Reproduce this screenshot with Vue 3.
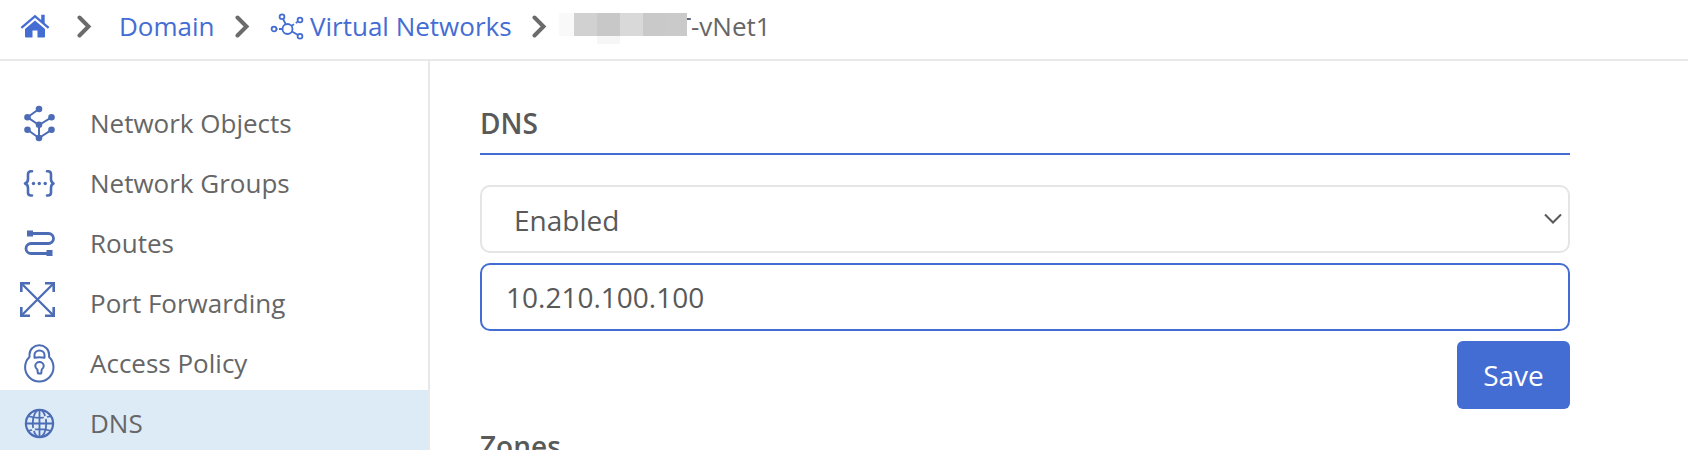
<script setup>
import { ref } from 'vue'

const items = ['Network Objects', 'Network Groups', 'Routes', 'Port Forwarding', 'Access Policy', 'DNS']
const active = ref('DNS')
const mode = ref('Enabled')
const server = ref('10.210.100.100')
</script>

<template>
  <div class="page">
    <nav class="crumbs">
      <svg class="home" width="30" height="26" viewBox="0 0 30 26">
        <path d="M15 6.6 25 15v7.6a1 1 0 0 1-1 1h-6.500v-7.200h-5v7.200H6a1 1 0 0 1-1-1V15z" />
        <path d="M15 .8 21.200 6V.8h3.500v8.100l4.700 4-1.500 1.800L15 3.800 2.100 14.700.6 12.900z" />
      </svg>
      <svg class="sep s1" width="15" height="24" viewBox="0 0 15 24"><path d="M2.500 2.500 11.500 11.500 2.500 20.500" /></svg>
      <a class="domain">Domain</a>
      <svg class="sep s2" width="15" height="24" viewBox="0 0 15 24"><path d="M2.500 2.500 11.500 11.500 2.500 20.500" /></svg>
      <svg class="vnet" width="34" height="28" viewBox="0 0 34 28">
        <circle cx="17.500" cy="16" r="5" />
        <circle cx="4" cy="16" r="2.400" />
        <circle cx="12" cy="3.700" r="2.400" />
        <circle cx="30" cy="7" r="2.400" />
        <circle cx="30" cy="23.200" r="2.400" />
        <path d="M13 5.800 15.600 11M22 18.500l6 3.500M6.500 16h1M9 16h3M22 12.600l2-1.300M25.800 10l1.600-1.100" />
      </svg>
      <a class="networks">Virtual Networks</a>
      <svg class="sep s3" width="15" height="24" viewBox="0 0 15 24"><path d="M2.500 2.500 11.500 11.500 2.500 20.500" /></svg>
      <span class="mask">
        <i class="m1"></i><i class="m2"></i><i class="m3"></i><i class="m4"></i><i class="m5"></i><i class="m6"></i>
      </span>
      <span class="clip"><span>T</span></span>
      <span class="current">-vNet1</span>
    </nav>

    <div class="body">
      <aside class="side">
        <div v-for="item in items" :key="item" class="row" :class="{ active: item === active }">
          <svg class="icon" width="40" height="44" viewBox="0 0 40 44">
            <g v-if="item === 'Network Objects'">
              <path class="l" stroke-width="2" d="M21 9 9.500 17.300 21 25 33.500 17.300M21 25V38M9.500 29.800 21 38 33.500 29.800" />
              <g class="f">
                <circle cx="21" cy="9" r="3.300" /><circle cx="9.500" cy="17.300" r="3.300" />
                <circle cx="33.500" cy="17.300" r="3.300" /><circle cx="21" cy="24.800" r="3.300" />
                <circle cx="9.500" cy="29.800" r="3.300" /><circle cx="33.500" cy="29.800" r="3.300" />
                <circle cx="21" cy="38" r="3.300" />
              </g>
            </g>
            <g v-else-if="item === 'Network Groups'">
              <path class="l" stroke-width="2.600" d="M14 11.300h-1q-3 0-3 3v4.700q0 3.500-3 4.500 3 1 3 4.500V32.500q0 3 3 3h1M29 11.300h1q3 0 3 3v4.700q0 3.500 2.500 4.500-2.500 1-2.500 4.500V32.500q0 3-3 3h-1" />
              <g class="f"><circle cx="15.500" cy="23.500" r="1.700" /><circle cx="21.300" cy="23.500" r="1.700" /><circle cx="27.200" cy="23.500" r="1.700" /></g>
            </g>
            <g v-else-if="item === 'Routes'">
              <path class="l" stroke-width="2.800" d="M14 13.500h16.500a5 5 0 0 1 0 10H13a5 5 0 0 0 0 10h16" />
              <path class="f" d="M9 10.500h6v6H9zM28.500 30h6v6h-6z" />
            </g>
            <g v-else-if="item === 'Port Forwarding'">
              <path class="l arrow" stroke-width="2.300" d="M3.500 3.500 35.500 35.500M35.500 3.500 3.500 35.500" />
              <path class="l arrow" stroke-width="2.600" d="M3.300 12V3.300H12M27 3.300h8.700V12M35.700 27v8.700H27M12 35.700H3.300V27" />
            </g>
            <g v-else-if="item === 'Access Policy'">
              <path class="l" stroke-width="2" d="M11.500 17V14.500a9.800 9.200 0 0 1 19.600 0V17a14.200 14.200 0 1 1-19.600 0" />
              <path class="l" stroke-width="2" d="M16.500 17.800V15a5 4.500 0 0 1 10 0v2.800q-5-1-10 0zM19.300 29.500q-2-1.500-2-3.500a4.200 4 0 0 1 8.400 0q0 2-2 3.500l-.5 4h-3.200z" />
            </g>
            <g v-else>
              <circle class="l" cx="21.500" cy="23.500" r="13.600" stroke-width="2.200" />
              <g class="l" stroke-width="1.800">
                <ellipse cx="21.500" cy="23.500" rx="6.800" ry="13.600" />
                <path d="M21.500 10v27M8 23.500h27M11.500 16.500q10 2.600 20 0M11.500 30.500q10-2.600 20 0" />
              </g>
              <circle class="dot" cx="27.500" cy="17.500" r="1.700" /><circle class="dot" cx="15.500" cy="29.500" r="1.700" />
            </g>
          </svg>
          <span class="label">{{ item }}</span>
        </div>
      </aside>

      <main class="main">
        <h2 class="title">DNS</h2>
        <div class="field select">
          <span>{{ mode }}</span>
          <svg width="18" height="12" viewBox="0 0 18 12"><path d="M1 1.500 9 9.500 17 1.500" /></svg>
        </div>
        <div class="field input">{{ server }}</div>
        <button class="save">Save</button>
        <h2 class="zones">Zones</h2>
      </main>
    </div>
  </div>
</template>

<style>
body {
  background: #fff;
}
</style>

<style scoped>
.page {
  width: 1688px;
  height: 450px;
  overflow: hidden;
  display: flex;
  flex-direction: column;
  font-family: "Open Sans", "Noto Sans", sans-serif;
  color: #666;
}
.crumbs {
  box-sizing: border-box;
  height: 61px;
  flex: none;
  display: flex;
  align-items: flex-start;
  border-bottom: 2px solid #e7e8e9;
  font-size: 26px;
  line-height: 36px;
  white-space: nowrap;
}
.crumbs > a,
.current,
.clip {
  margin-top: 8px;
  flex: none;
}
.crumbs a {
  color: #446dd4;
}
.crumbs svg {
  flex: none;
}
.home {
  margin: 14px 0 0 20px;
  fill: #446dd4;
}
.sep {
  margin-top: 15px;
  fill: none;
  stroke: #6b6b6b;
  stroke-width: 4;
  stroke-linecap: round;
}
.s1 { margin-left: 27px; }
.domain { width: 96px; margin-left: 27px; }
.s2 { margin-left: 20px; }
.vnet {
  margin: 13px 0 0 20px;
  fill: none;
  stroke: #446dd4;
  stroke-width: 1.8;
}
.networks { width: 204px; margin-left: 6px; }
.s3 { margin-left: 18px; }
.mask {
  flex: none;
  display: flex;
  height: 23px;
  margin: 13px 0 0 12px;
}
.mask i { width: 23px; }
.mask .m1 { width: 15px; background: #f9f9f9; }
.mask .m2 { background: #d1d1d1; }
.mask .m3 { background: #c8c8c8; box-shadow: 0 8px #f6f6f6; }
.mask .m4 { background: #d9d9d9; }
.mask .m5 { background: #c9c9c9; }
.mask .m6 { width: 21px; background: #cacaca; }
.clip {
  width: 4px;
  overflow: hidden;
  display: flex;
  justify-content: flex-end;
}
.body {
  flex: 1;
  min-height: 0;
  display: flex;
}
.side {
  flex: none;
  width: 428px;
  padding-top: 29px;
  border-right: 2px solid #e7e8e9;
}
.row {
  height: 60px;
  display: flex;
  align-items: flex-start;
}
.row.active {
  background: #ddebf7;
}
.icon {
  margin: 10px 0 0 18px;
  flex: none;
}
.label {
  margin: 15px 0 0 32px;
  font-size: 26px;
  line-height: 36px;
}
.l {
  fill: none;
  stroke: #4c6cb5;
  stroke-linecap: round;
  stroke-linejoin: round;
}
.arrow {
  stroke-linecap: butt;
  stroke-linejoin: miter;
}
.f { fill: #4c6cb5; }
.dot { fill: #ddebf7; }
.main {
  width: 1090px;
  flex: none;
  margin-left: 50px;
  display: flex;
  flex-direction: column;
  font-size: 28px;
  color: #595959;
}
.title {
  box-sizing: border-box;
  height: 94px;
  flex: none;
  margin: 0 0 30px;
  padding-top: 42px;
  border-bottom: 2px solid #446dd4;
  font-size: 28px;
  line-height: 40px;
  font-weight: 600;
}
.field {
  box-sizing: border-box;
  height: 68px;
  flex: none;
  border: 2px solid #e4e5e5;
  border-radius: 10px;
  margin-bottom: 10px;
  line-height: 64px;
}
.select {
  display: flex;
  justify-content: space-between;
  align-items: flex-start;
  padding: 1px 6px 0 32px;
}
.select svg {
  margin-top: 25px;
  fill: none;
  stroke: #595959;
  stroke-width: 2;
}
.input {
  border-color: #446dd4;
  padding-left: 24px;
}
.save {
  align-self: flex-end;
  width: 113px;
  height: 68px;
  flex: none;
  border: 0;
  padding: 0;
  border-radius: 6px;
  background: #446dd4;
  color: #fff;
  font: 28px/40px "Open Sans", sans-serif;
}
.zones {
  margin: 17px 0 0;
  font-size: 28px;
  line-height: 40px;
  font-weight: 600;
}
</style>
